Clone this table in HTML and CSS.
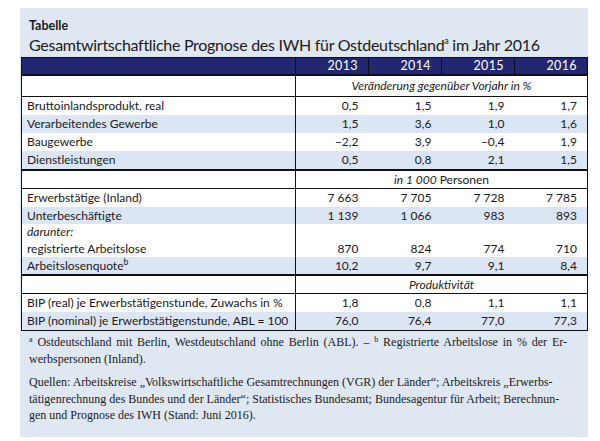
FILE: index.html
```html
<!DOCTYPE html>
<html lang="de">
<head>
<meta charset="utf-8">
<title>Tabelle</title>
<link rel="stylesheet" href="styles.css">
</head>
<body>
<div class="box">
  <div class="kicker">Tabelle</div>
  <h1 class="title">Gesamtwirtschaftliche Prognose des IWH für Ostdeutschland<sup class="sup">a</sup> im Jahr 2016</h1>
  <table class="tbl">
    <colgroup>
      <col class="c-label">
      <col class="c-val">
      <col class="c-val">
      <col class="c-val">
      <col class="c-val">
    </colgroup>
    <thead>
      <tr class="head">
        <th class="lab"></th><th>2013</th><th>2014</th><th>2015</th><th>2016</th>
      </tr>
    </thead>
    <tbody>
      <tr class="section first">
        <td class="lab"></td><td colspan="4"><em>Veränderung gegenüber Vorjahr in %</em></td>
      </tr>
      <tr class="row">
        <td class="lab">Bruttoinlandsprodukt, real</td><td>0,5</td><td>1,5</td><td>1,9</td><td>1,7</td>
      </tr>
      <tr class="row band">
        <td class="lab">Verarbeitendes Gewerbe</td><td>1,5</td><td>3,6</td><td>1,0</td><td>1,6</td>
      </tr>
      <tr class="row">
        <td class="lab">Baugewerbe</td><td>−2,2</td><td>3,9</td><td>−0,4</td><td>1,9</td>
      </tr>
      <tr class="row band">
        <td class="lab">Dienstleistungen</td><td>0,5</td><td>0,8</td><td>2,1</td><td>1,5</td>
      </tr>
      <tr class="section">
        <td class="lab"></td><td colspan="4"><em>in 1 000</em> Personen</td>
      </tr>
      <tr class="row">
        <td class="lab">Erwerbstätige (Inland)</td><td>7 663</td><td>7 705</td><td>7 728</td><td>7 785</td>
      </tr>
      <tr class="row band short">
        <td class="lab">Unterbeschäftigte</td><td>1 139</td><td>1 066</td><td>983</td><td>893</td>
      </tr>
      <tr class="row tiny">
        <td class="lab"><em>darunter:</em></td><td></td><td></td><td></td><td></td>
      </tr>
      <tr class="row short">
        <td class="lab">registrierte Arbeitslose</td><td>870</td><td>824</td><td>774</td><td>710</td>
      </tr>
      <tr class="row band short">
        <td class="lab">Arbeitslosenquote<sup class="sup-s">b</sup></td><td>10,2</td><td>9,7</td><td>9,1</td><td>8,4</td>
      </tr>
      <tr class="section">
        <td class="lab"></td><td colspan="4"><em>Produktivität</em></td>
      </tr>
      <tr class="row">
        <td class="lab">BIP (real) je Erwerbstätigenstunde, Zuwachs in %</td><td>1,8</td><td>0,8</td><td>1,1</td><td>1,1</td>
      </tr>
      <tr class="row band">
        <td class="lab">BIP (nominal) je Erwerbstätigenstunde, ABL = 100</td><td>76,0</td><td>76,4</td><td>77,0</td><td>77,3</td>
      </tr>
    </tbody>
  </table>
  <div class="notes">
    <p class="note">
      <span class="line just"><sup class="fn">a</sup> Ostdeutschland mit Berlin, Westdeutschland ohne Berlin (ABL). – <sup class="fn">b</sup> Registrierte Arbeitslose in % der Er-</span>
      <span class="line">werbspersonen (Inland).</span>
    </p>
    <p class="note">
      <span class="line">Quellen: Arbeitskreise „Volkswirtschaftliche Gesamtrechnungen (VGR) der Länder“; Arbeitskreis „Erwerbs-</span>
      <span class="line">tätigenrechnung des Bundes und der Länder“; Statistisches Bundesamt; Bundesagentur für Arbeit; Berechnun-</span>
      <span class="line">gen und Prognose des IWH (Stand: Juni 2016).</span>
    </p>
  </div>
</div>
</body>
</html>
```

FILE: styles.css
```css
html, body {
  margin: 0;
  padding: 0;
  background: #ffffff;
}

body {
  font-family: "Lato", "Liberation Sans", sans-serif;
  color: #1b1b22;
}

.box {
  margin: 8px 0 0 20px;
  width: 568px;
  height: 429px;
  box-sizing: border-box;
  padding: 11px 1px 0 1px;
  background: #dfe7f3;
}

.kicker {
  font-weight: 700;
  font-size: 12.5px;
  line-height: 14px;
  padding-left: 8px;
}

.title {
  margin: 0;
  padding-left: 8px;
  font-weight: 400;
  font-size: 16px;
  line-height: 24px;
  letter-spacing: -0.28px;
  white-space: nowrap;
}

.sup {
  font-size: 9px;
  vertical-align: 7px;
  line-height: 0;
}

.tbl {
  width: 566px;
  border-collapse: collapse;
  table-layout: fixed;
  border: 1px solid #111;
  font-size: 12px;
  margin-top: 0;
}

.c-label { width: 274px; }
.c-val { width: 73px; }

.tbl td, .tbl th {
  padding: 0 10px 0 0;
  text-align: right;
  white-space: nowrap;
}

.tbl .lab {
  text-align: left;
  padding: 0 0 0 5px;
  border-right: 1px solid #111;
}

.head th {
  background: #22276f;
  color: #ffffff;
  font-weight: 400;
  font-size: 12.5px;
  height: 16px;
  line-height: 16px;
  border: 1px solid #0c0c20;
  border-bottom: 2px solid #0c0c20;
  letter-spacing: 0.4px;
}

.section td {
  background: #ffffff;
  height: 17px;
  line-height: 17px;
  text-align: center;
  padding: 0;
  border-top: 2px solid #111;
  border-bottom: 1px solid #111;
}

.section.first td {
  height: 20px;
  line-height: 20px;
  border-top: 0;
}

.section td.lab { padding: 0; }

.row td {
  background: #ffffff;
  height: 18px;
  line-height: 18px;
}

.row.short td {
  height: 17px;
  line-height: 17px;
}

.row.tiny td {
  height: 16px;
  line-height: 16px;
}

.row.band td {
  background: #dce5f3;
}

.sup-s {
  font-size: 8.5px;
  vertical-align: 5px;
  line-height: 0;
}

.notes {
  padding: 3px 20px 0 8px;
  font-family: "Liberation Serif", "DejaVu Serif", serif;
  font-size: 12px;
  line-height: 16.5px;
  color: #1b1b22;
}

.note {
  margin: 0 0 7px 0;
}

.line {
  display: block;
  white-space: nowrap;
}

.line.just {
  text-align: justify;
  text-align-last: justify;
  white-space: normal;
}

.fn {
  font-size: 8px;
  vertical-align: 4px;
  line-height: 0;
}
```
